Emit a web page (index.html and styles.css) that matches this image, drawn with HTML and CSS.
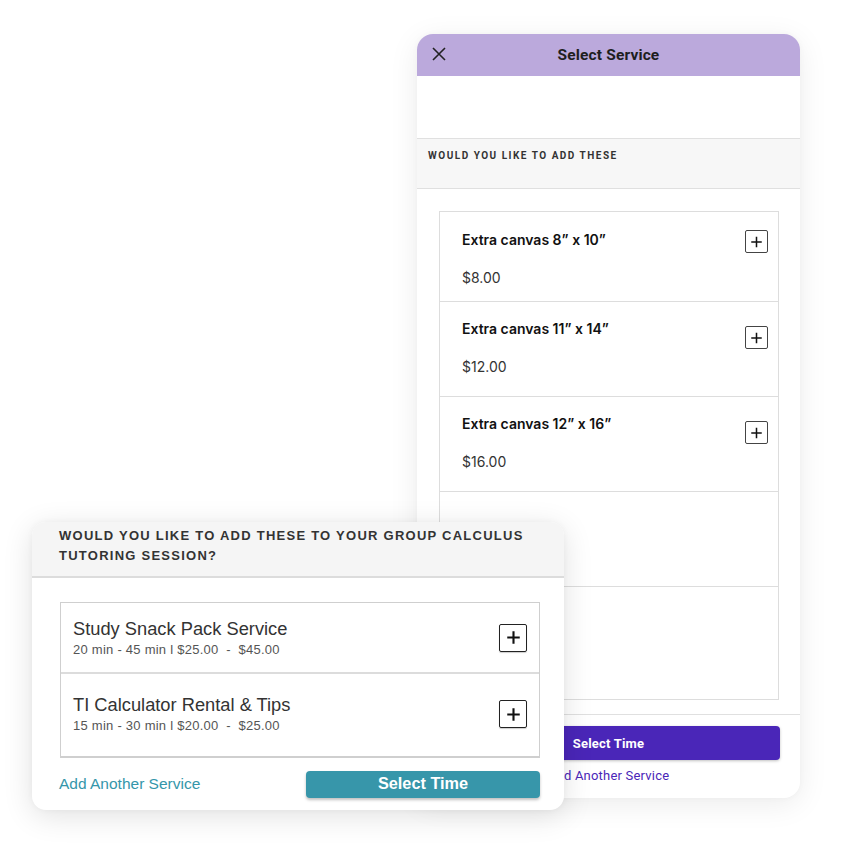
FILE: index.html
```html
<!DOCTYPE html>
<html lang="en">
<head>
<meta charset="utf-8">
<title>Select Service</title>
<link rel="stylesheet" href="styles.css">
</head>
<body>
<div class="canvas">
  <section class="phone">
    <header class="phone-head">
      <svg class="close" viewBox="0 0 16 16" width="16" height="16"><path d="M2 2 L14 14 M14 2 L2 14" stroke="#222" stroke-width="1.6" fill="none"/></svg>
      <h1 class="phone-title">Select Service</h1>
    </header>
    <div class="phone-blank"></div>
    <div class="phone-section"><span class="phone-section-text">WOULD YOU LIKE TO ADD THESE</span></div>
    <div class="phone-content">
      <ul class="plist">
        <li class="pitem pitem-first">
          <div class="pitem-text"><div class="pitem-title">Extra canvas 8” x 10”</div><div class="pitem-price">$8.00</div></div>
          <span class="pplus"><svg viewBox="0 0 22 22" width="22" height="22"><path d="M11 5.5 V16.5 M5.5 11 H16.5" stroke="#111" stroke-width="1.6"/></svg></span>
        </li>
        <li class="pitem">
          <div class="pitem-text"><div class="pitem-title">Extra canvas 11” x 14”</div><div class="pitem-price">$12.00</div></div>
          <span class="pplus pplus-low"><svg viewBox="0 0 22 22" width="22" height="22"><path d="M11 5.5 V16.5 M5.5 11 H16.5" stroke="#111" stroke-width="1.6"/></svg></span>
        </li>
        <li class="pitem">
          <div class="pitem-text"><div class="pitem-title">Extra canvas 12” x 16”</div><div class="pitem-price">$16.00</div></div>
          <span class="pplus pplus-low"><svg viewBox="0 0 22 22" width="22" height="22"><path d="M11 5.5 V16.5 M5.5 11 H16.5" stroke="#111" stroke-width="1.6"/></svg></span>
        </li>
        <li class="pitem"></li>
        <li class="pitem pitem-tall"></li>
      </ul>
    </div>
    <footer class="phone-foot">
      <button class="phone-btn">Select Time</button>
      <a class="phone-link">Add Another Service</a>
    </footer>
  </section>

  <section class="modal">
    <header class="modal-head">WOULD YOU LIKE TO ADD THESE TO YOUR GROUP CALCULUS TUTORING SESSION?</header>
    <div class="modal-body">
      <ul class="mlist">
        <li class="mitem mitem-a">
          <div class="mitem-text"><div class="mitem-title">Study Snack Pack Service</div><div class="mitem-sub">20 min - 45 min l $25.00 &nbsp;- &nbsp;$45.00</div></div>
          <span class="mplus"><svg viewBox="0 0 26 26" width="25" height="25"><path d="M13 6.5 V19.5 M6.5 13 H19.5" stroke="#111" stroke-width="2.2"/></svg></span>
        </li>
        <li class="mitem mitem-b">
          <div class="mitem-text"><div class="mitem-title">TI Calculator Rental &amp; Tips</div><div class="mitem-sub">15 min - 30 min l $20.00 &nbsp;- &nbsp;$25.00</div></div>
          <span class="mplus"><svg viewBox="0 0 26 26" width="25" height="25"><path d="M13 6.5 V19.5 M6.5 13 H19.5" stroke="#111" stroke-width="2.2"/></svg></span>
        </li>
      </ul>
      <div class="modal-foot">
        <a class="modal-link">Add Another Service</a>
        <button class="modal-btn">Select Time</button>
      </div>
    </div>
  </section>
</div>
</body>
</html>
```
FILE: styles.css
```css
* { box-sizing: border-box; }
html, body { margin: 0; padding: 0; background: #fff; }
.canvas { position: relative; width: 851px; height: 860px; overflow: hidden; }

/* Right phone card */
.phone {
  position: absolute; left: 417px; top: 34px; width: 383px; height: 764px;
  background: #fff; border-radius: 16px; overflow: hidden;
  box-shadow: 0 6px 30px rgba(0,0,0,0.08), 0 0 6px rgba(0,0,0,0.03);
  font-family: Roboto, "Liberation Sans", sans-serif;
  display: flex; flex-direction: column;
}
.phone-head {
  height: 42px; background: #bba9dc; position: relative;
  display: flex; align-items: center; justify-content: center; flex-shrink: 0;
}
.close { position: absolute; left: 14px; top: 12px; }
.phone-title { margin: 0; font-size: 15.5px; font-weight: 700; color: #1e1e1e; letter-spacing: 0.15px; }
.phone-blank { height: 62px; flex-shrink: 0; }
.phone-section {
  height: 51px; flex-shrink: 0; background: #f7f7f7;
  border-top: 1px solid #e0e0e0; border-bottom: 1px solid #e0e0e0;
  padding: 5px 11px 0;
}
.phone-section-text { font-size: 10px; line-height: 12px; font-weight: 700; letter-spacing: 1.5px; color: #333; }
.phone-content { height: 525px; flex-shrink: 0; padding: 22px 21px 0 22px; overflow: hidden; }
.plist { list-style: none; margin: 0; padding: 0; border: 1px solid #ddd; border-bottom: none; }
.pitem {
  height: 95px; border-bottom: 1px solid #ddd;
  display: flex; justify-content: space-between; align-items: flex-start;
  padding: 17px 10px 0 22px;
}
.pitem-first { height: 90px; padding-top: 18px; }
.pitem-tall { height: 113px; }
.pitem-title { font-family: Inter, Roboto, sans-serif; font-size: 14px; line-height: 20px; font-weight: 600; color: #111; }
.pitem-price { font-family: Inter, Roboto, sans-serif; font-size: 14px; line-height: 20px; color: #333; margin-top: 18px; }
.pplus {
  width: 23px; height: 23px; border: 1px solid #444; border-radius: 2px;
  display: flex; align-items: center; justify-content: center; margin-top: 0;
}
.pplus-low { margin-top: 7px; }
.phone-foot {
  flex: 1; border-top: 1px solid #e0e0e0; padding: 11px 20px 0;
  display: flex; flex-direction: column; align-items: center;
}
.phone-btn {
  width: 100%; height: 34px; border: none; border-radius: 4px; background: #4a26b8;
  color: #fff; font-family: Roboto, sans-serif; font-size: 13px; font-weight: 700; letter-spacing: 0.2px;
  box-shadow: 0 1px 3px rgba(0,0,0,0.25);
}
.phone-link { margin-top: 8px; font-size: 13px; line-height: 16px; color: #4a26b8; letter-spacing: 0.2px; }

/* Left modal card */
.modal {
  position: absolute; left: 32px; top: 522px; width: 532px; height: 288px;
  background: #fff; border-radius: 14px; overflow: hidden;
  box-shadow: 0 6px 30px rgba(0,0,0,0.12), 0 0 6px rgba(0,0,0,0.04);
  font-family: "Liberation Sans", Arial, sans-serif;
}
.modal-head {
  height: 56px; background: #f5f5f5; border-bottom: 2px solid #dcdcdc;
  padding: 4px 27px 0; font-size: 13px; line-height: 20px; font-weight: 700;
  letter-spacing: 1.25px; color: #333;
}
.modal-body { padding: 24px 24px 0 28px; }
.mlist { list-style: none; margin: 0; padding: 0; border: 1px solid #cfcfcf; border-bottom-width: 2px; }
.mitem { display: flex; align-items: center; justify-content: space-between; padding: 0 12px 0 12px; }
.mitem-a { height: 71px; border-bottom: 2px solid #dcdcdc; }
.mitem-b { height: 82px; padding-bottom: 2px; }
.mitem-title { font-size: 18.3px; line-height: 20px; color: #333; }
.mitem-sub { font-size: 13px; line-height: 15px; color: #555; margin-top: 3px; letter-spacing: 0.25px; }
.mplus {
  width: 28px; height: 28px; border: 1.5px solid #222; border-radius: 2px;
  display: flex; align-items: center; justify-content: center;
  box-shadow: 0 1px 1px rgba(0,0,0,0.2);
}
.modal-foot { display: flex; justify-content: space-between; align-items: center; margin-top: 13px; }
.modal-link { font-size: 15.5px; color: #3596aa; margin-left: -1px; margin-top: -1px; }
.modal-btn {
  width: 234px; height: 27px; border: none; border-radius: 4px; background: #3796aa;
  color: #fff; font-family: "Liberation Sans", Arial, sans-serif; font-size: 16.3px; font-weight: 700;
  padding: 0 0 3px; box-shadow: 0 2px 3px rgba(0,0,0,0.25);
}
```
